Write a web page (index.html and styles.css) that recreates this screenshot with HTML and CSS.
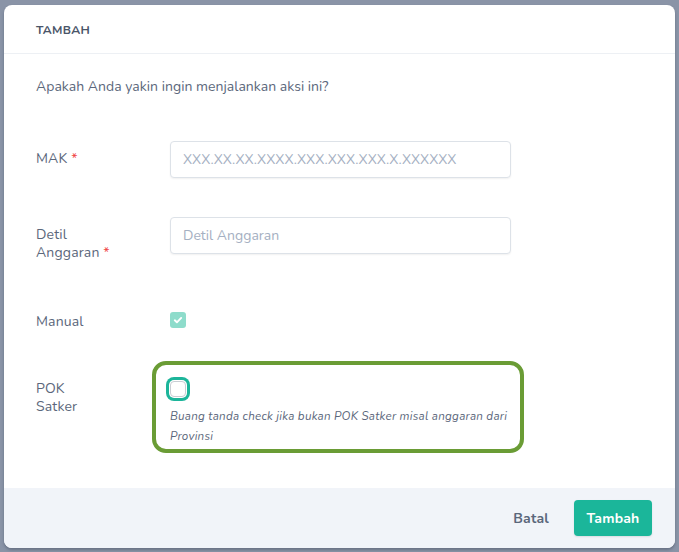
FILE: index.html
```html
<!DOCTYPE html>
<html lang="id">
<head>
<meta charset="utf-8">
<title>Tambah</title>
<link rel="stylesheet" href="styles.css">
</head>
<body>
<div class="modal">
  <div class="modal-header">TAMBAH</div>
  <div class="modal-body">
    <p class="question">Apakah Anda yakin ingin menjalankan aksi ini?</p>
    <div class="form">
      <div class="row row-mak">
        <label class="label">MAK <span class="req">*</span></label>
        <div class="control"><input class="input" type="text" placeholder="XXX.XX.XX.XXXX.XXX.XXX.XXX.X.XXXXXX"></div>
      </div>
      <div class="row row-detil">
        <label class="label">Detil<br>Anggaran <span class="req">*</span></label>
        <div class="control"><input class="input" type="text" placeholder="Detil Anggaran"></div>
      </div>
      <div class="row row-manual">
        <label class="label label-tight">Manual</label>
        <div class="control"><span class="check checked"><svg viewBox="0 0 16 16" width="16" height="16"><path d="M4.8 8.3l2.1 2 4.3-4.4" fill="none" stroke="#fff" stroke-width="1.9" stroke-linecap="round" stroke-linejoin="round"/></svg></span></div>
      </div>
      <div class="row row-pok">
        <label class="label label-pok">POK<br>Satker</label>
        <div class="control">
          <div class="highlight">
            <span class="check focus"></span>
            <p class="help">Buang tanda check jika bukan POK Satker misal anggaran dari Provinsi</p>
          </div>
        </div>
      </div>
    </div>
  </div>
  <div class="modal-footer">
    <button class="btn-link" type="button">Batal</button>
    <button class="btn-primary" type="button">Tambah</button>
  </div>
</div>
</body>
</html>
```
FILE: styles.css
```css
* { box-sizing: border-box; }
html, body { margin: 0; padding: 0; }
body {
  width: 679px;
  height: 552px;
  background: #8a94a7;
  font-family: "Nunito", "Lato", "Noto Sans", sans-serif;
  overflow: hidden;
  padding: 5px 4px 4px 4px;
}
.modal {
  width: 671px;
  height: 543px;
  background: #fff;
  border-radius: 8px;
  overflow: hidden;
  display: flex;
  flex-direction: column;
  box-shadow: 0 2px 3px rgba(40, 50, 70, 0.35);
}
.modal-header {
  height: 49px;
  flex: none;
  display: flex;
  align-items: center;
  padding: 1px 32px 0 32px;
  font-size: 12px;
  font-weight: 700;
  letter-spacing: 0.3px;
  color: #4a5568;
  border-bottom: 1px solid #edf0f4;
}
.modal-body {
  flex: 1;
  padding: 23px 32px 0 32px;
}
.question {
  margin: 0;
  font-size: 14px;
  line-height: 20px;
  color: #5b677b;
  letter-spacing: 0.02px;
}
.form {
  margin-top: 44px;
  display: flex;
  flex-direction: column;
}
.row {
  display: grid;
  grid-template-columns: 134px 341px;
  align-items: start;
}
.row-detil { margin-top: 39px; }
.row-manual { margin-top: 50px; }
.row-pok { margin-top: 30px; }
.label {
  font-size: 14px;
  line-height: 18px;
  color: #5b677b;
  padding-top: 9px;
  letter-spacing: 0.15px;
}
.label-tight { padding-top: 1px; }
.label-pok { padding-top: 19px; line-height: 18px; }
.req { color: #ef4444; }
.input {
  display: block;
  width: 341px;
  height: 37px;
  border: 1px solid #dde2e8;
  border-radius: 4px;
  padding: 0 12px;
  font-family: inherit;
  font-size: 14px;
  color: #3d4a5c;
  background: #fff;
  box-shadow: 0 1px 2px rgba(0, 0, 0, 0.06);
  outline: none;
}
.input::placeholder { color: #a5b0c2; }
.check {
  display: block;
  width: 16px;
  height: 16px;
  border-radius: 3px;
}
.check svg { display: block; }
.checked { background: #8edccb; }
.focus {
  background: #fff;
  border: 1px solid #c9cdd3;
  border-radius: 4px;
  box-shadow: 0 0 0 1px #fff, 0 0 0 4px #1cb59a;
}
.highlight {
  margin-left: -18px;
  width: 372px;
  height: 92px;
  border: 4px solid #6a9c35;
  border-radius: 14px;
  padding: 16px 8px 0 14px;
}
.help {
  margin: 9px 0 0 0;
  font-size: 11.6px;
  line-height: 20px;
  font-style: italic;
  color: #5b677b;
  letter-spacing: 0.25px;
  width: 344px;
}
.modal-footer {
  height: 60px;
  flex: none;
  background: #f1f4f9;
  display: flex;
  align-items: center;
  justify-content: flex-end;
  padding: 0 23px 0 0;
  gap: 25px;
}
.btn-link {
  border: 0;
  background: none;
  padding: 0;
  font-family: inherit;
  font-size: 14px;
  font-weight: 700;
  color: #5b677b;
  letter-spacing: 0.2px;
}
.btn-primary {
  height: 36px;
  width: 78px;
  border: 0;
  border-radius: 4px;
  background: #1bb69a;
  color: #fff;
  font-family: inherit;
  font-size: 14px;
  font-weight: 700;
  letter-spacing: 0.2px;
  box-shadow: 0 1px 2px rgba(0, 0, 0, 0.1);
}
```
